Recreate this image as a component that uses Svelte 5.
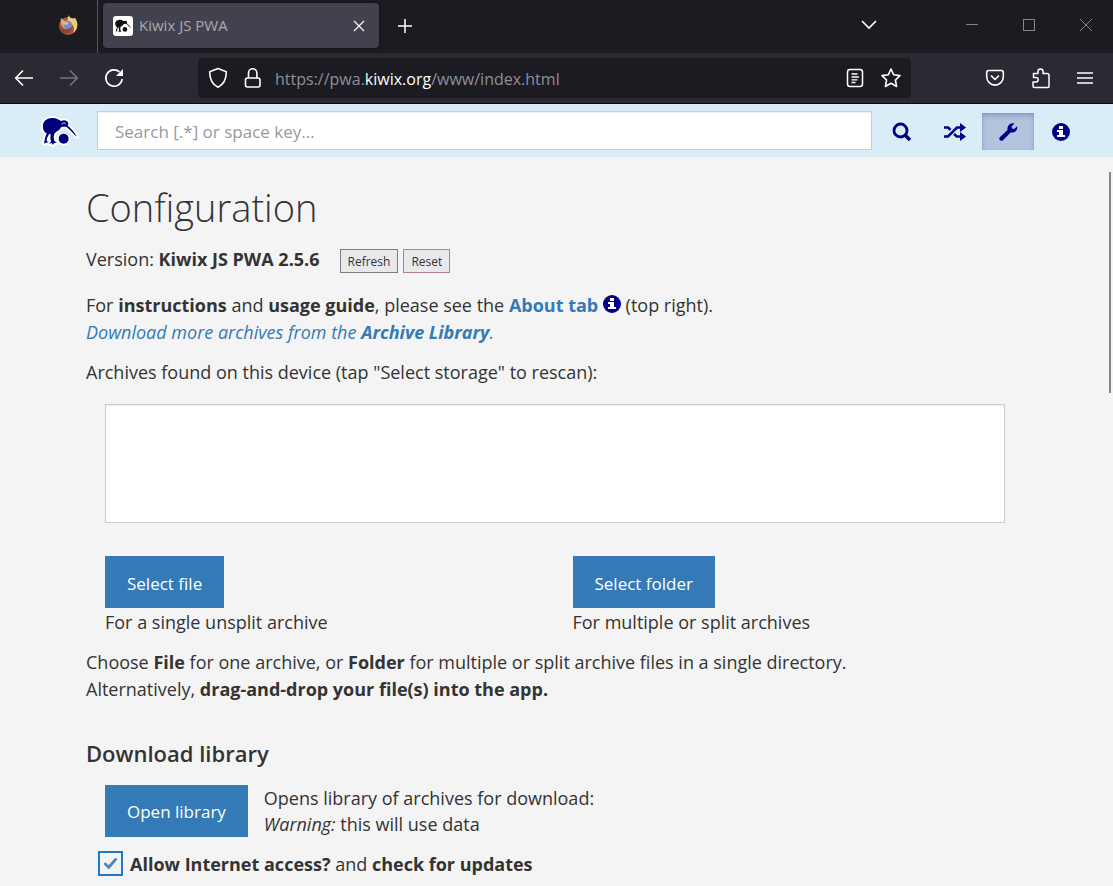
<script>
  let query = $state('');
  let internet = $state(true);
</script>

{#snippet kiwi()}
  <path d="M15 48C12 30 24 19 42 18c12-1 20 4 27 9 8-4 17-3 21 4 2 4 1 7-1 10 11 9 21 19 28 34-12-10-20-22-32-31-6 1-11 0-15 1-4 7-9 12-16 15l-5 5-2 11 2 11 8 5-8 1-5 6-2-6-9 3 6-7-2-12 1-11-5 1-6 11-1 9 6 4-9 1-5 3 1-7 3-13 4-11C20 62 16 56 15 48z" />
  <circle cx="77" cy="80" r="15" />
{/snippet}

{#snippet info()}
  <circle cx="9" cy="9" r="9" fill="#00008b" />
  <path d="M7 3h4v3H7zM5 7h6v5h2v2H5v-2h2V9H5z" fill="#fff" />
{/snippet}

<div class="window">
  <div class="tabs">
    <div class="pinned">
      <svg width="22" height="22" viewBox="0 0 22 22" aria-hidden="true">
        <circle cx="11" cy="12" r="9" fill="#a25242" />
        <path d="M12 1c0 3 3 4 6 3 4 5 3 12-2 15 2-4 1-9-4-10-2-2-2-5 0-8z" fill="#f0ca82" />
        <path d="M4 4l4 3c3-1 5 0 6 2l-4 2 2 3-3 1C4 13 3 9 4 4z" fill="#dba27c" />
        <circle cx="11" cy="11" r="4" fill="#6c8fc8" />
        <path d="M2 13c3 3 8 4 13 0-1 5-7 8-11 5z" fill="#8b4438" />
        <path d="M5 8l5 0 2 2-4 1z" fill="#e8b790" />
      </svg>
    </div>
    <div class="tab">
      <svg width="20" height="20" viewBox="0 0 20 20" aria-hidden="true">
        <rect width="20" height="20" rx="3" fill="#fff" />
        <g transform="translate(0 1) scale(.155 .155)" fill="#111">{@render kiwi()}</g>
      </svg>
      <span>Kiwix JS PWA</span>
      <button aria-label="Close tab">
        <svg width="12" height="12" viewBox="0 0 12 12" stroke="#f4f4f6" stroke-width="1.3"><path d="M1 1l10 10M11 1L1 11" /></svg>
      </button>
    </div>
    <button class="plus" aria-label="New tab">
      <svg width="16" height="16" viewBox="0 0 16 16" stroke="#fff" stroke-width="1.5"><path d="M8 1v14M1 8h14" /></svg>
    </button>
    <button class="list" aria-label="List tabs">
      <svg width="16" height="10" viewBox="0 0 16 10" fill="none" stroke="#fff" stroke-width="1.6"><path d="M1 1l7 7 7-7" /></svg>
    </button>
    <div class="controls">
      <button aria-label="Minimise">
        <svg width="14" height="14" viewBox="0 0 14 14" stroke="#85848a"><path d="M1 6.500h12" /></svg>
      </button>
      <button aria-label="Maximise">
        <svg width="14" height="14" viewBox="0 0 14 14" fill="none" stroke="#85848a"><rect x="1.500" y="1.500" width="11" height="11" /></svg>
      </button>
      <button aria-label="Close">
        <svg width="14" height="14" viewBox="0 0 14 14" stroke="#85848a"><path d="M1 1l12 12M13 1L1 13" /></svg>
      </button>
    </div>
  </div>

  <div class="toolbar">
    <div class="moves">
      <button aria-label="Back">
        <svg width="20" height="18" viewBox="0 0 20 18" fill="none" stroke="#fff" stroke-width="1.6"><path d="M19 9H2M9 1.500L1.700 9 9 16.500" /></svg>
      </button>
      <button aria-label="Forward">
        <svg width="20" height="18" viewBox="0 0 20 18" fill="none" stroke="#77767c" stroke-width="1.5"><path d="M1 9h17M11 1.500L18.300 9 11 16.500" /></svg>
      </button>
      <button aria-label="Reload">
        <svg width="20" height="20" viewBox="0 0 20 20"><path d="M15.500 3.900A8.200 8.200 0 1 0 18.200 11" fill="none" stroke="#fff" stroke-width="1.7" /><path d="M19 1v7h-7z" fill="#fff" /></svg>
      </button>
    </div>
    <div class="address">
      <svg width="20" height="22" viewBox="0 0 20 22" fill="none" stroke="#fff" stroke-width="1.6" stroke-linejoin="round" aria-hidden="true"><path d="M10 1.500l8.300 3.200c0 7-2 12.500-8.300 15.500C3.700 17.200 1.700 11.700 1.700 4.700z" /></svg>
      <svg width="18" height="22" viewBox="0 0 18 22" fill="none" stroke="#fff" stroke-width="1.6" aria-hidden="true"><rect x="1.500" y="11" width="14.500" height="9" rx="2" /><path d="M4.500 11V6a4.200 4.200 0 0 1 8.400 0v5" /></svg>
      <span class="url">https://pwa.<b>kiwix.org</b>/www/index.html</span>
      <button aria-label="Reader view">
        <svg width="18" height="20" viewBox="0 0 18 20" fill="none" stroke="#fff" stroke-width="1.5" stroke-linecap="round"><rect x="1.500" y="1.500" width="15" height="17" rx="2.500" /><path d="M6 6h5M6 9h6.500M6 11.800h5M6 14.500h3" stroke-width="1.3" /></svg>
      </button>
      <button aria-label="Bookmark">
        <svg width="22" height="22" viewBox="0 0 22 22" fill="none" stroke="#fff" stroke-width="1.6" stroke-linejoin="round"><path d="M11 2l2.700 5.800 6.300.8-4.600 4.400 1.200 6.500L11 16.300 5.400 19.500 6.600 13 2 8.600l6.300-.8z" /></svg>
      </button>
    </div>
    <div class="extras">
      <button aria-label="Pocket">
        <svg width="20" height="18" viewBox="0 0 20 18" fill="none" stroke="#fff" stroke-width="1.600" stroke-linejoin="round"><path d="M3.500 1.500h13a1.800 1.800 0 0 1 1.800 2v4.300a8.300 8.300 0 0 1-16.600 0V3.500a1.800 1.800 0 0 1 1.800-2z" /><path d="M6 6.500l4 4 4-4" /></svg>
      </button>
      <button aria-label="Extensions">
        <svg width="20" height="22" viewBox="0 0 20 22" fill="none" stroke="#fff" stroke-width="1.500" stroke-linejoin="round"><path d="M2.500 6.500H7v-2a2.500 2.500 0 0 1 5 0v2h4a2 2 0 0 1 2 2v11a1 1 0 0 1-1 1H3.500a1.500 1.500 0 0 1-1.500-1.500V15h3a2.200 2.200 0 0 0 0-4.400H2.500z" /></svg>
      </button>
      <button aria-label="Menu">
        <svg width="16" height="14" viewBox="0 0 16 14" stroke="#fff" stroke-width="1.500"><path d="M0 2h16M0 7h16M0 12h16" /></svg>
      </button>
    </div>
  </div>

  <nav>
    <svg width="44" height="38" viewBox="0 0 132 114" aria-hidden="true">
      <g stroke="#fff" stroke-width="11" stroke-linejoin="round" fill="#fff">{@render kiwi()}</g>
      <g fill="#00007d">{@render kiwi()}</g>
      <path d="M71 36q5-5 12-2M63 69q6-8 16-8 12 1 18 12" fill="none" stroke="#b9d6e6" stroke-width="3" />
    </svg>
    <input type="text" aria-label="Search" placeholder="Search [.*] or space key..." bind:value={query} />
    <div class="navicons">
      <button aria-label="Find">
        <svg width="20" height="20" viewBox="0 0 20 20" fill="none" stroke="#00008b"><circle cx="8.500" cy="8.500" r="6.500" stroke-width="2.800" /><path d="M13 13l5 5" stroke-width="3.600" /></svg>
      </button>
      <button aria-label="Random article">
        <svg width="22" height="18" viewBox="0 0 22 18" fill="none" stroke="#00008b" stroke-width="2.600"><path d="M0 4.500h4l2.500 2.300M10 11l2.800 2.500H17M0 13.500h4l9-9h4" /><path d="M16 0l6 4.500L16 9zM16 9l6 4.500-6 4.500z" fill="#00008b" stroke="none" /></svg>
      </button>
      <button class="active" aria-label="Configuration">
        <svg width="20" height="20" viewBox="0 0 20 20" fill="#00008b"><path d="M16.500 1.500l-3 3 .5 2 2.300.5 2.800-2.700c.8 3.500-1.700 6.900-6.500 6.200L5 18.200c-1.800 1.700-5-.8-3.200-3L9.500 8C9 3.500 12.500.3 16.500 1.500z" /></svg>
      </button>
      <button aria-label="About">
        <svg width="18" height="18" viewBox="0 0 18 18">{@render info()}</svg>
      </button>
    </div>
  </nav>

  <main>
    <h1>Configuration</h1>
    <div class="version">
      <span>Version: <b>Kiwix JS PWA 2.5.6</b></span>
      <button>Refresh</button>
      <button class="danger">Reset</button>
    </div>
    <p>
      For <b>instructions</b> and <b>usage guide</b>, please see the <a href="#about"><b>About tab</b></a>
      <svg class="inline" width="18" height="18" viewBox="0 0 18 18" aria-hidden="true">{@render info()}</svg> (top right).<br />
      <a href="#library"><i>Download more archives from the <b>Archive Library</b>.</i></a>
    </p>
    <label class="found" for="archives">Archives found on this device (tap "Select storage" to rescan):</label>
    <select id="archives" size="5"></select>

    <div class="pickers">
      <div>
        <button class="primary">Select file</button>
        <div>For a single unsplit archive</div>
      </div>
      <div>
        <button class="primary">Select folder</button>
        <div>For multiple or split archives</div>
      </div>
    </div>
    <p>
      Choose <b>File</b> for one archive, or <b>Folder</b> for multiple or split archive files in a single directory.<br />
      Alternatively, <b>drag-and-drop your file(s) into the app.</b>
    </p>

    <h3>Download library</h3>
    <div class="library">
      <button class="primary">Open library</button>
      <div>Opens library of archives for download:<br /><i>Warning:</i> this will use data</div>
    </div>
    <label class="check">
      <input type="checkbox" bind:checked={internet} />
      <span><b>Allow Internet access?</b> and <b>check for updates</b></span>
    </label>
    <div class="thumb"></div>
  </main>
</div>

<style>
  :global(body) { margin: 0; background: #f4f4f4; }
  .window {
    display: flex; flex-direction: column; height: 100vh; overflow: hidden;
    font-family: "Open Sans", "Noto Sans", sans-serif; font-size: 18px; line-height: 27px; color: #333;
  }
  *, *::before, *::after { box-sizing: border-box; }
  button { font: inherit; color: inherit; border: 0; padding: 0; background: none; }
  svg { display: block; flex: none; }
  b { font-weight: 700; }

  .tabs { display: flex; align-items: center; flex: none; height: 53px; background: #1c1b22; }
  .pinned { display: flex; align-items: center; justify-content: flex-end; width: 98px; height: 100%; padding: 0 18px 4px 0; border-right: 1px solid #55545c; }
  .tab {
    display: flex; align-items: center; gap: 6px; width: 276px; height: 45px; margin: 0 0 2px 5px; padding: 0 14px 0 10px;
    background: #42414d; border-radius: 4px; color: #a9a9b2; font-size: 15px; box-shadow: 0 0 3px #0008;
  }
  .tab span { flex: 1; }
  .plus { margin: 0 0 2px 18px; }
  .list { margin: 0 88px 4px auto; }
  .controls { display: flex; gap: 43px; padding: 0 20px 3px 0; }

  .toolbar { display: flex; align-items: center; flex: none; height: 51px; background: #2b2a33; border-bottom: 1px solid #0c0c0d; }
  .moves { display: flex; align-items: center; gap: 25px; width: 198px; padding-left: 14px; }
  .address { display: flex; align-items: center; flex: 1; height: 40px; gap: 16px; padding: 0 9px 0 10px; background: #1c1b22; border-radius: 4px; }
  .url { flex: 1; margin-left: -3px; padding-top: 2px; font-size: 16px; color: #8f8f9a; white-space: nowrap; }
  .url b { font-weight: 400; color: #fbfbfe; }
  .extras { display: flex; align-items: center; justify-content: flex-end; gap: 26px; width: 202px; padding-right: 20px; }

  nav { display: flex; align-items: center; flex: none; height: 53px; padding-left: 38px; background: #d9edf7; }
  nav input {
    flex: 1; min-width: 0; height: 39px; margin-left: 15px; padding: 2px 17px 0; font: inherit; font-size: 17px; color: #333;
    background: #fff; border: 1px solid #ccc; border-radius: 0; box-shadow: inset 0 1px 1px #0001;
  }
  nav input::placeholder { color: #999; opacity: 1; }
  .navicons { display: flex; gap: 1px; width: 241px; padding: 2px 0 0 4px; }
  .navicons button { display: grid; place-items: center; width: 52px; height: 37px; }
  .navicons .active { background: #b0c4de; box-shadow: inset 0 3px 5px #00006430, inset 0 0 1px #888; }

  main { position: relative; flex: 1; min-height: 0; padding: 22px 86px 0; }
  h1 { margin: 0 0 11px; font-size: 38px; line-height: 56px; font-weight: 300; }
  .version { display: flex; align-items: center; gap: 5px; height: 27px; }
  .version span { margin-right: 15px; }
  .version button { height: 24px; margin-top: 2px; padding: 1px 7px 0; border: 1px solid #7d7d80; background: #e9e9ed; font-size: 12px; line-height: 21px; }
  .version .danger { border-color: #b48088; }
  p { margin: 19px 0 13px; }
  a { color: #337ab7; text-decoration: none; }
  .inline { display: inline-block; vertical-align: -1px; }
  .found { display: block; }
  select { display: block; width: calc(100% - 41px); height: 119px; margin: 18px 0 33px 19px; background: #fff; border: 1px solid #ccc; border-radius: 0; box-shadow: inset 0 1px 1px #0001; }
  .pickers { display: grid; grid-template-columns: 1fr 1fr; padding-left: 19px; margin-right: -13px; }
  .primary { display: block; height: 52px; padding: 2px 22px 0; background: #337ab7; color: #fff; font-size: 17px; }
  .pickers div div { padding-top: 1px; }
  .pickers + p { margin: 13px 0 0; }
  h3 { margin: 35px 0 17px; font-size: 22px; line-height: 30px; font-weight: 600; }
  .library { display: flex; align-items: center; gap: 16px; padding-left: 19px; line-height: 26px; }
  .check { display: flex; align-items: center; gap: 7px; margin: 12px 0 0 12px; }
  .check span { padding-top: 2px; }
  .check input {
    appearance: none; display: grid; place-items: center; width: 25px; height: 25px; margin: 0;
    border: 2px solid #1979ca; background: #f4f4f4;
  }
  .check input:checked::before { content: ""; width: 14px; height: 12px; background: #4587c4; clip-path: polygon(0 55%, 14% 40%, 36% 65%, 86% 0, 100% 14%, 38% 100%); }
  .thumb { position: absolute; top: 15px; right: 2px; width: 2px; height: 221px; background: #858585; }
</style>
